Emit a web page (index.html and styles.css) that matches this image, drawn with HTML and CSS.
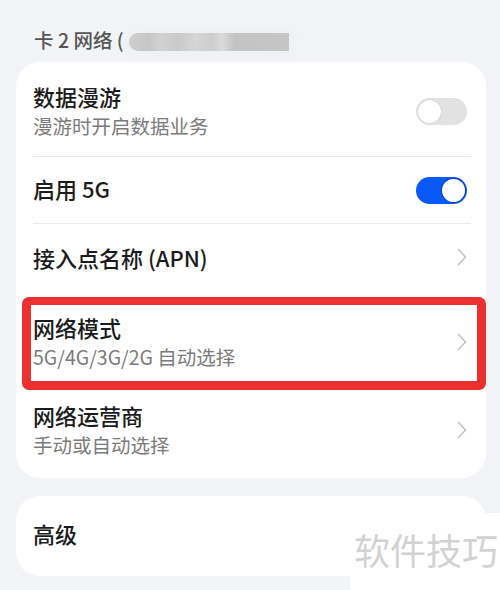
FILE: index.html
```html
<!DOCTYPE html>
<html lang="zh">
<head>
<meta charset="utf-8">
<link rel="stylesheet" href="styles.css">
</head>
<body>
<div class="page">
  <div class="section-head">
    <span class="head-text">卡 2 网络 (</span>
    <span class="blurred"></span>
  </div>

  <div class="card">
    <div class="row row-roam">
      <div class="texts">
        <div class="title">数据漫游</div>
        <div class="sub">漫游时开启数据业务</div>
      </div>
      <span class="toggle toggle-off"><span class="knob"></span></span>
    </div>
    <div class="divider"></div>
    <div class="row row-5g">
      <div class="texts">
        <div class="title">启用 5G</div>
      </div>
      <span class="toggle toggle-on"><span class="knob"></span></span>
    </div>
    <div class="divider"></div>
    <div class="row row-apn">
      <div class="texts">
        <div class="title">接入点名称 (APN)</div>
      </div>
      <svg class="chev" width="10" height="18" viewBox="0 0 10 18"><path d="M1.5 1.5 L8.5 9 L1.5 16.5" fill="none" stroke="#c6c6c6" stroke-width="1.8" stroke-linecap="round" stroke-linejoin="round"/></svg>
    </div>
    <div class="row row-mode">
      <div class="texts">
        <div class="title">网络模式</div>
        <div class="sub">5G/4G/3G/2G 自动选择</div>
      </div>
      <svg class="chev" width="10" height="18" viewBox="0 0 10 18"><path d="M1.5 1.5 L8.5 9 L1.5 16.5" fill="none" stroke="#c6c6c6" stroke-width="1.8" stroke-linecap="round" stroke-linejoin="round"/></svg>
    </div>
    <div class="row row-op">
      <div class="texts">
        <div class="title">网络运营商</div>
        <div class="sub">手动或自动选择</div>
      </div>
      <svg class="chev" width="10" height="18" viewBox="0 0 10 18"><path d="M1.5 1.5 L8.5 9 L1.5 16.5" fill="none" stroke="#c6c6c6" stroke-width="1.8" stroke-linecap="round" stroke-linejoin="round"/></svg>
    </div>
    <div class="highlight"></div>
  </div>

  <div class="card card-adv">
    <div class="row row-adv">
      <div class="texts">
        <div class="title">高级</div>
      </div>
    </div>
  </div>

  <div class="watermark">软件技巧</div>
</div>
</body>
</html>
```

FILE: styles.css
```css
html, body {
  margin: 0;
  padding: 0;
}
body {
  background: #f1f3f6;
  font-family: "Noto Sans CJK SC", "Noto Sans", sans-serif;
}
.page {
  position: relative;
  width: 500px;
  height: 590px;
  overflow: hidden;
}
.section-head {
  height: 62px;
  box-sizing: border-box;
  padding: 26px 0 0 34px;
  display: flex;
  align-items: flex-start;
}
.head-text {
  font-size: 19.5px;
  line-height: 28px;
  color: #555;
  font-weight: 500;
}
.blurred {
  display: block;
  width: 160px;
  height: 18px;
  margin-top: 7px;
  margin-left: 5px;
  border-radius: 9px 0 0 9px;
  background: linear-gradient(90deg, #cfcfcf 0%, #c6c6c6 12%, #d2d2d2 20%, #c9c9c9 30%, #d6d6d6 42%, #cdcdcd 52%, #dadada 58%, #c3c3c3 66%, #c6c6c6 100%);
  box-shadow: 0 0 6px 4px #eef0f3;
}
.card {
  position: relative;
  margin: 0 14px 0 16px;
  background: #fff;
  border-radius: 24px;
  padding: 0 19px 0 17px;
}
.row {
  display: flex;
  align-items: center;
  justify-content: space-between;
  box-sizing: border-box;
}
.texts {
  display: flex;
  flex-direction: column;
  padding-bottom: 4px;
}
.title {
  font-size: 22px;
  line-height: 30px;
  color: #1b1b1b;
  font-weight: 500;
}
.sub {
  font-size: 19.5px;
  line-height: 30px;
  color: #7b7b7b;
}
.row-roam { height: 94px; padding: 8px 0 0; }
.row-5g { height: 66px; }
.row-apn { height: 69px; }
.row-mode { height: 98px; padding-top: 4px; }
.row-op { height: 87px; padding-bottom: 6px; }
.row-adv { height: 80px; padding-bottom: 2px; }
.card-adv { margin-top: 18px; }
.divider {
  height: 1px;
  background: #e9e9e9;
  margin-right: -4px;
}
.toggle {
  position: relative;
  display: block;
  width: 51px;
  height: 27px;
  border-radius: 14px;
  flex: none;
}
.row-roam .toggle { margin-bottom: 3px; }
.toggle-off { background: #e2e2e2; }
.toggle-on { background: #0a59f7; }
.knob {
  position: absolute;
  top: 2px;
  width: 23px;
  height: 23px;
  border-radius: 50%;
  background: #fff;
}
.toggle-off .knob { left: 2px; box-shadow: 0 0 1px rgba(0,0,0,0.25); }
.toggle-on .knob { right: 2px; box-shadow: 0 0 0 1px #0741b8; }
.chev { flex: none; display: block; margin-bottom: 4px; }
.highlight {
  position: absolute;
  left: 6px;
  top: 235px;
  width: 464px;
  height: 93px;
  box-sizing: border-box;
  border: 9px solid #ec2f2f;
  border-top-width: 8px;
  border-radius: 7px;
}
.watermark {
  position: absolute;
  right: 0;
  bottom: 0;
  width: 150px;
  height: 77px;
  background: #fff;
  box-sizing: border-box;
  padding: 14px 0 0 4px;
  font-size: 36px;
  line-height: 44px;
  color: #d2d2d2;
}
```
